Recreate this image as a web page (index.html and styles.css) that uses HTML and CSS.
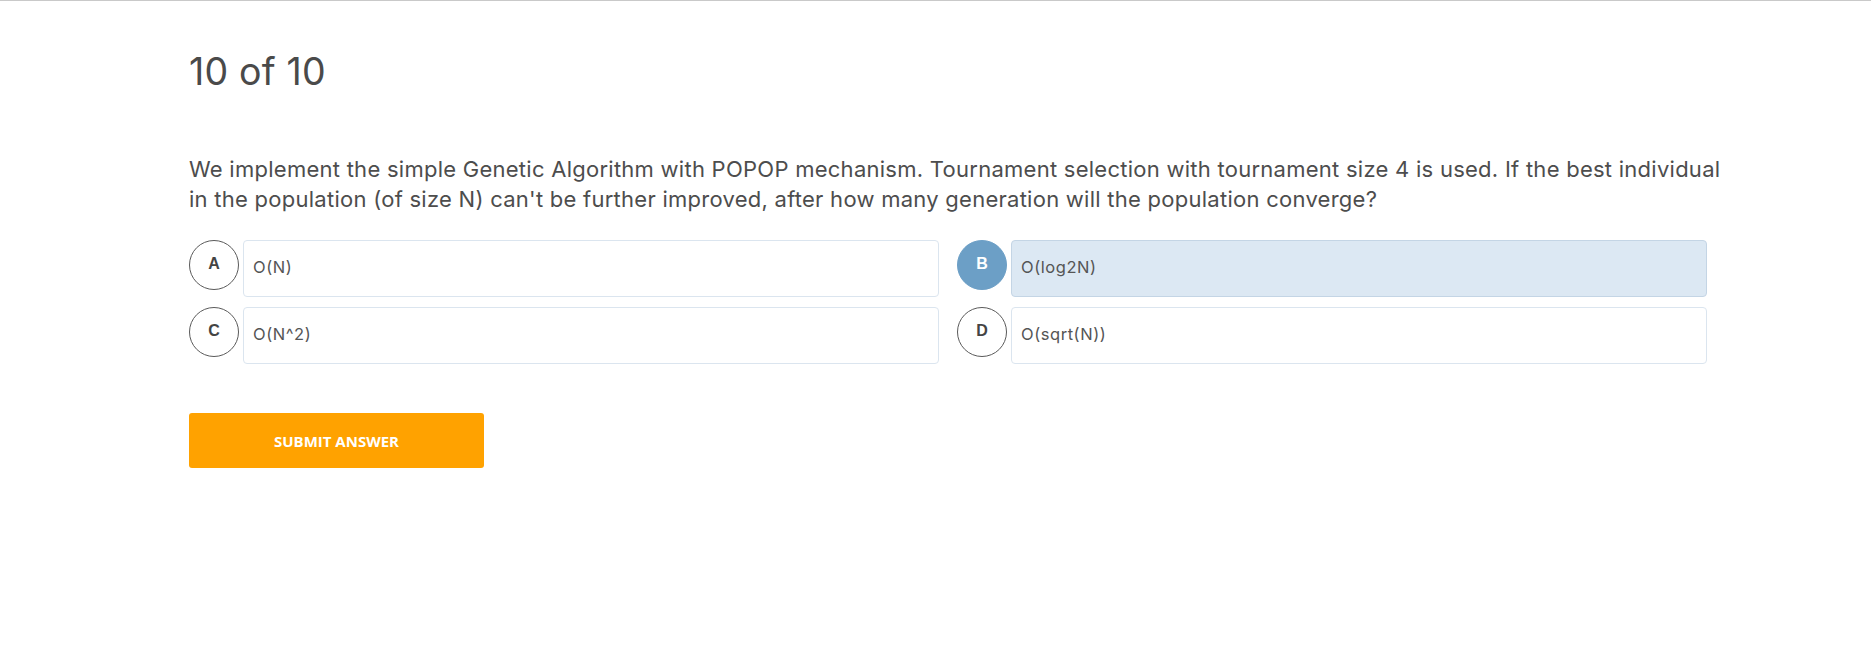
FILE: index.html
```html
<!DOCTYPE html>
<html lang="en">
<head>
<meta charset="utf-8">
<title>Quiz</title>
<link rel="stylesheet" href="styles.css">
</head>
<body>
<main class="quiz">
  <h1 class="quiz-count">10 of 10</h1>
  <p class="quiz-question">We implement the simple Genetic Algorithm with POPOP mechanism. Tournament selection with tournament size 4 is used. If the best individual in the population (of size N) can't be further improved, after how many generation will the population converge?</p>
  <div class="options">
    <div class="option">
      <span class="option-letter">A</span>
      <div class="option-box">O(N)</div>
    </div>
    <div class="option option-selected">
      <span class="option-letter">B</span>
      <div class="option-box">O(log2N)</div>
    </div>
    <div class="option">
      <span class="option-letter">C</span>
      <div class="option-box">O(N^2)</div>
    </div>
    <div class="option">
      <span class="option-letter">D</span>
      <div class="option-box">O(sqrt(N))</div>
    </div>
  </div>
  <button class="submit-btn" type="button">SUBMIT ANSWER</button>
</main>
</body>
</html>
```
FILE: styles.css
```css
* { box-sizing: border-box; }

html, body {
  margin: 0;
  background: #ffffff;
}

body {
  border-top: 1px solid #c9c9c9;
  font-family: Inter, "Noto Sans", sans-serif;
}

.quiz {
  padding: 49px 0 0 189px;
  width: 1730px;
}

.quiz-count {
  margin: 0;
  font-size: 37.5px;
  line-height: 43px;
  font-weight: 400;
  color: #4a4a4a;
  letter-spacing: 0.2px;
}

.quiz-question {
  margin: 61px 0 0 0;
  font-size: 22px;
  line-height: 30px;
  color: #4d4d4d;
  letter-spacing: 0.26px;
}

.options {
  margin-top: 26px;
  display: grid;
  grid-template-columns: 750px 750px;
  column-gap: 18px;
  row-gap: 10px;
}

.option {
  display: flex;
  align-items: flex-start;
  gap: 4px;
}

.option-letter {
  flex: 0 0 50px;
  width: 50px;
  height: 50px;
  border-radius: 50%;
  border: 1px solid #5a5a5a;
  display: flex;
  align-items: center;
  justify-content: center;
  font-family: "Liberation Sans", Arial, sans-serif;
  font-weight: 700;
  font-size: 16px;
  color: #444;
  padding-bottom: 2px;
}

.option-box {
  flex: 1;
  height: 57px;
  border: 1px solid #dbe5ef;
  border-radius: 4px;
  background: #fff;
  display: flex;
  align-items: center;
  padding: 0 0 3px 9px;
  font-size: 16.5px;
  letter-spacing: 0.55px;
  color: #555;
}

.option-selected .option-letter {
  background: #6c9fc6;
  border-color: #6c9fc6;
  color: #fff;
}

.option-selected .option-box {
  background: #dce8f3;
  border-color: #c4d5e5;
}

.submit-btn {
  margin-top: 49px;
  width: 295px;
  height: 55px;
  border: none;
  border-radius: 3px;
  background: #ffa200;
  color: #fff;
  font-family: "Open Sans", sans-serif;
  font-weight: 700;
  font-size: 15px;
  cursor: pointer;
  display: block;
}
```
